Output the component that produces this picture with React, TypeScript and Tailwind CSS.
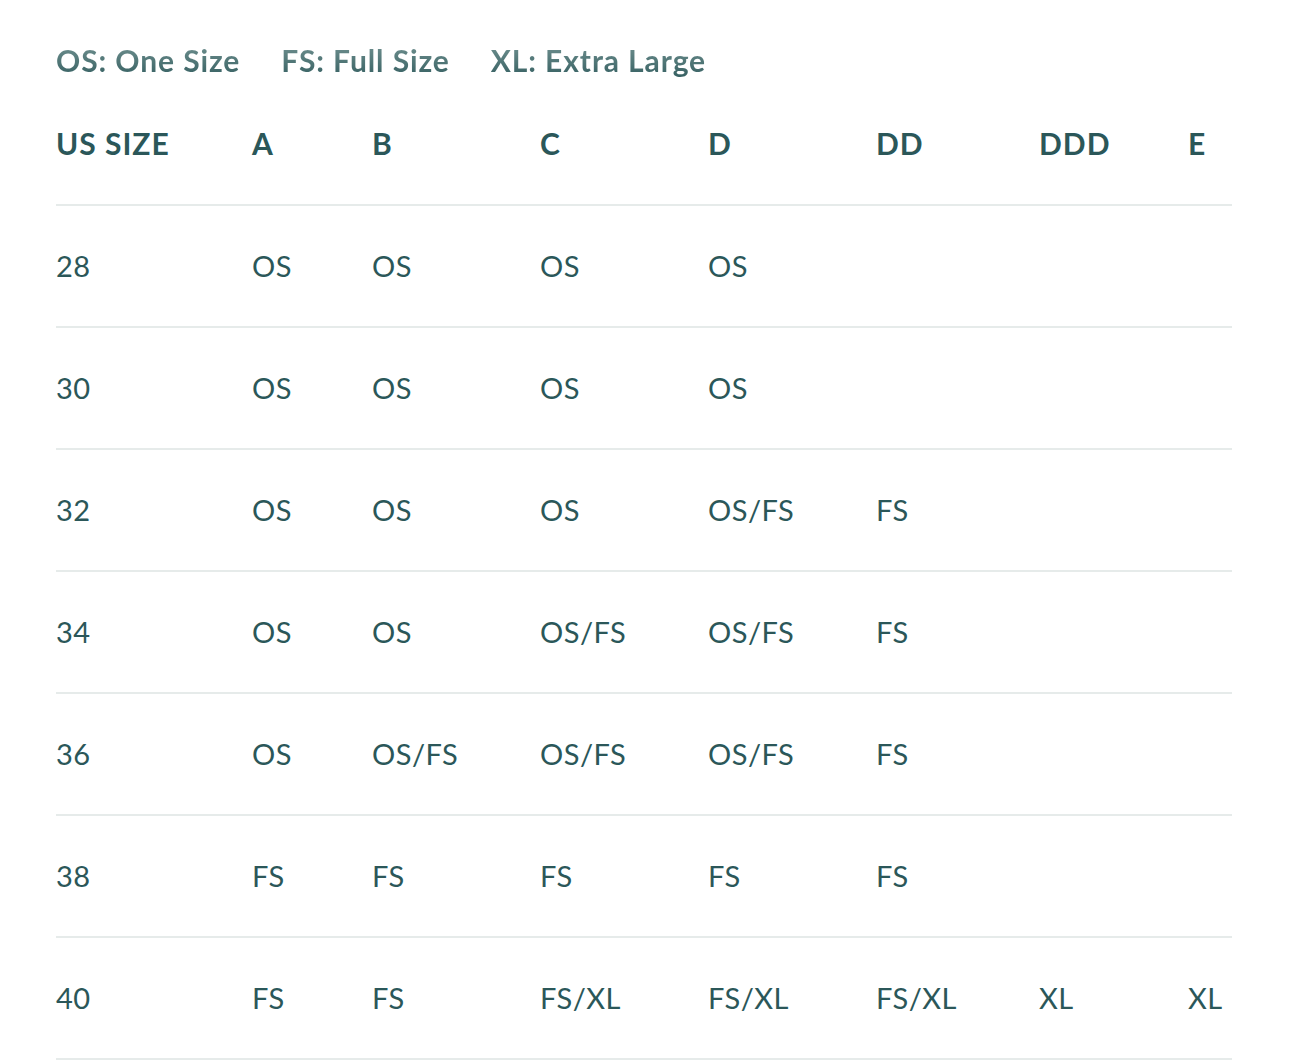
export default function App() {
  const columns = ['US SIZE', 'A', 'B', 'C', 'D', 'DD', 'DDD', 'E']

  const rows = [
    ['28', 'OS', 'OS', 'OS', 'OS', '', '', ''],
    ['30', 'OS', 'OS', 'OS', 'OS', '', '', ''],
    ['32', 'OS', 'OS', 'OS', 'OS/FS', 'FS', '', ''],
    ['34', 'OS', 'OS', 'OS/FS', 'OS/FS', 'FS', '', ''],
    ['36', 'OS', 'OS/FS', 'OS/FS', 'OS/FS', 'FS', '', ''],
    ['38', 'FS', 'FS', 'FS', 'FS', 'FS', '', ''],
    ['40', 'FS', 'FS', 'FS/XL', 'FS/XL', 'FS/XL', 'XL', 'XL'],
  ]

  const legenda = ['OS: One Size', 'FS: Full Size', 'XL: Extra Large']

  const grid = 'grid grid-cols-[196px_120px_168px_168px_168px_163px_149px_1fr]'

  return (
    <div className="min-h-screen bg-white px-[56px] pt-[38px] text-[#2b5759] [font-family:Lato,'Noto_Sans',sans-serif]">
      <div className="flex gap-[41px] text-[30px] font-bold leading-[44px] tracking-[0.9px]">
        {legenda.map((item) => (
          <span key={item} className="bg-gradient-to-b from-[#7a9998] to-[#2e5a5c] bg-clip-text text-transparent">
            {item}
          </span>
        ))}
      </div>

      <div className="w-[1176px]">
        <div className={`${grid} h-[124px] items-center border-b-2 border-[#e6ebea] text-[30px] font-bold tracking-[1px]`}>
          {columns.map((col) => (
            <div key={col}>{col}</div>
          ))}
        </div>

        {rows.map((row, i) => (
          <div key={i} className={`${grid} h-[122px] items-center border-b-2 border-[#e6ebea] text-[29px] tracking-[0.5px]`}>
            {row.map((cell, j) => (
              <div key={j}>{cell}</div>
            ))}
          </div>
        ))}
      </div>
    </div>
  )
}
